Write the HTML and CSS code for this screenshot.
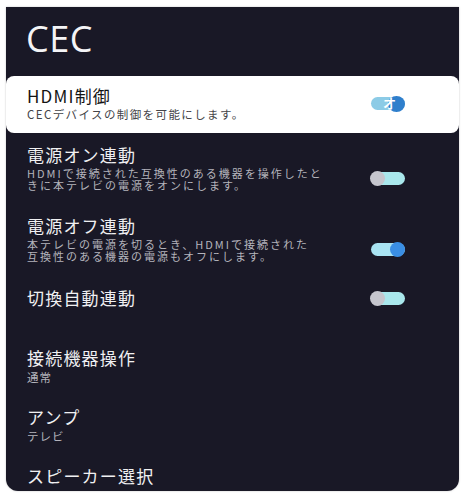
FILE: index.html
```html
<!DOCTYPE html>
<html lang="ja">
<head>
<meta charset="utf-8">
<link rel="stylesheet" href="styles.css">
</head>
<body>
<div class="panel">
  <h1 class="heading">CEC</h1>
  <div class="item card">
    <div class="text">
      <div class="title">HDMI制御</div>
      <div class="sub">CECデバイスの制御を可能にします。</div>
    </div>
    <div class="toggle toggle-card"><span class="track"></span><span class="knob"></span><span class="mark">オ</span></div>
  </div>
  <div class="item row-desc">
    <div class="title">電源オン連動</div>
    <div class="desc">HDMIで接続された互換性のある機器を操作したと<br>きに本テレビの電源をオンにします。</div>
    <div class="toggle toggle-off"><span class="track"></span><span class="knob"></span></div>
  </div>
  <div class="item row-desc">
    <div class="title">電源オフ連動</div>
    <div class="desc">本テレビの電源を切るとき、HDMIで接続された<br>互換性のある機器の電源もオフにします。</div>
    <div class="toggle toggle-on"><span class="track"></span><span class="knob"></span></div>
  </div>
  <div class="item row-single">
    <div class="title">切換自動連動</div>
    <div class="toggle toggle-off"><span class="track"></span><span class="knob"></span></div>
  </div>
  <div class="item row-value first-value">
    <div class="title">接続機器操作</div>
    <div class="value">通常</div>
  </div>
  <div class="item row-value">
    <div class="title">アンプ</div>
    <div class="value">テレビ</div>
  </div>
  <div class="item row-last">
    <div class="title">スピーカー選択</div>
  </div>
</div>
</body>
</html>
```

FILE: styles.css
```css
html, body {
  margin: 0;
  padding: 0;
  background: #ffffff;
}
body {
  width: 465px;
  height: 495px;
  overflow: hidden;
  font-family: "Noto Sans CJK JP", "Noto Sans", sans-serif;
}
.panel {
  margin: 7px 0 0 6px;
  width: 453px;
  height: 484px;
  background: #191826;
  border-radius: 0 0 12px 12px;
  box-shadow: 0 0 2px rgba(0,0,0,0.25);
  overflow: hidden;
  color: #f0f0f2;
}
.heading {
  margin: 0;
  padding: 8px 0 0 20px;
  height: 61px;
  font-family: "Open Sans", "Noto Sans", sans-serif;
  font-weight: 400;
  font-size: 36px;
  line-height: 48px;
  letter-spacing: 0.5px;
  color: #f4f4f6;
}
.item {
  display: grid;
  grid-template-columns: 1fr 36px;
  column-gap: 0;
  padding-left: 21px;
  padding-right: 53px;
}
.title {
  grid-column: 1;
  font-size: 17px;
  line-height: 22px;
  letter-spacing: 1.2px;
  white-space: nowrap;
}
.card {
  background: #ffffff;
  color: #141414;
  border-radius: 8px;
  padding-top: 9px;
  padding-bottom: 12px;
  align-items: center;
}
.card .text { grid-column: 1; }
.card .toggle { grid-column: 2; grid-row: 1; }
.sub {
  font-size: 11.5px;
  line-height: 14px;
  letter-spacing: 1.4px;
  color: #444448;
  white-space: nowrap;
}
.desc {
  grid-column: 1;
  grid-row: 2;
  margin-top: 1px;
  font-size: 11px;
  line-height: 12px;
  letter-spacing: 2px;
  color: #b4b4bc;
  white-space: nowrap;
}
.row-desc {
  padding-top: 11px;
  padding-bottom: 13px;
}
.row-desc .toggle {
  grid-column: 2;
  grid-row: 2;
  align-self: center;
}
.row-single {
  padding-top: 12px;
  padding-bottom: 12px;
  align-items: center;
}
.row-single .toggle { grid-column: 2; grid-row: 1; }
.value {
  grid-column: 1;
  font-size: 11.5px;
  line-height: 16px;
  letter-spacing: 1px;
  color: #b4b4bc;
}
.first-value { padding-top: 26px; }
.row-value + .row-value { padding-top: 21px; }
.row-last { padding-top: 21px; }

.toggle {
  position: relative;
  width: 35px;
  height: 15px;
}
.track {
  position: absolute;
  left: 1px;
  right: 0;
  top: 1px;
  height: 13px;
  border-radius: 7px;
}
.knob {
  position: absolute;
  top: 0;
  width: 15px;
  height: 15px;
  border-radius: 50%;
}
.toggle-off .track { background: #a9e7ec; }
.toggle-off .knob { left: 0; background: #c6c6ce; }
.toggle-on .track { background: #a9e3f2; }
.toggle-on .knob { right: 0; background: #3a8ee4; }
.toggle-card .track { background: #8ccbe6; }
.toggle-card .knob { right: 0; width: 17px; height: 16px; background: #2f7fcc; }
.mark {
  position: absolute;
  left: 13px;
  top: -2px;
  font-size: 13px;
  line-height: 18px;
  color: #ffffff;
  font-weight: 700;
}
```
